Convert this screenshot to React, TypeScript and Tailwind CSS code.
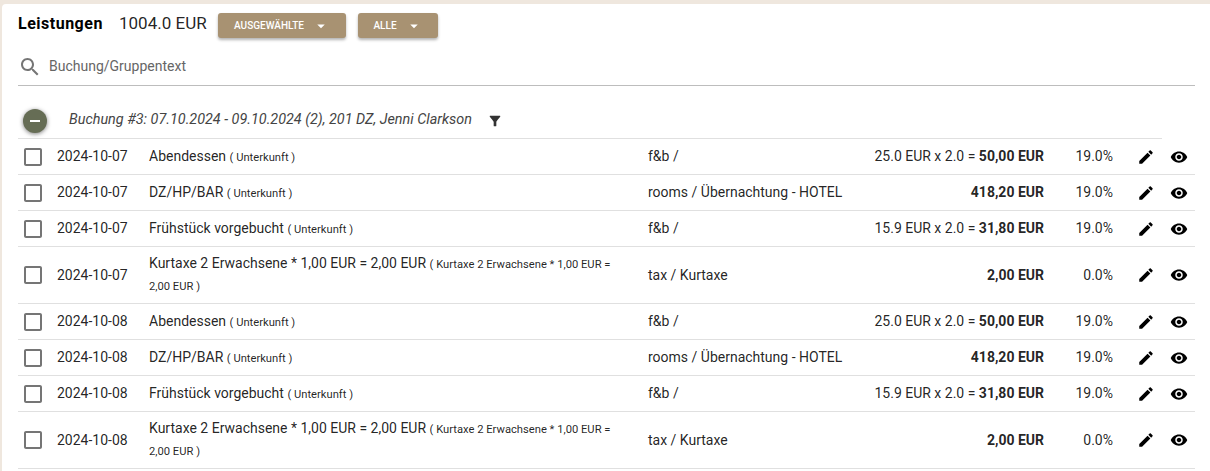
import React from "react";

type Row = {
  date: string;
  name: string;
  note: string;
  cat: string;
  calc?: string;
  total: string;
  tax: string;
  tall?: boolean;
};

const dayRows = (date: string): Row[] => [
  { date, name: "Abendessen", note: "Unterkunft", cat: "f&b /", calc: "25.0 EUR x 2.0 = ", total: "50,00 EUR", tax: "19.0%" },
  { date, name: "DZ/HP/BAR", note: "Unterkunft", cat: "rooms / Übernachtung - HOTEL", total: "418,20 EUR", tax: "19.0%" },
  { date, name: "Frühstück vorgebucht", note: "Unterkunft", cat: "f&b /", calc: "15.9 EUR x 2.0 = ", total: "31,80 EUR", tax: "19.0%" },
  {
    date,
    name: "Kurtaxe 2 Erwachsene * 1,00 EUR = 2,00 EUR",
    note: "Kurtaxe 2 Erwachsene * 1,00 EUR = 2,00 EUR",
    cat: "tax / Kurtaxe",
    total: "2,00 EUR",
    tax: "0.0%",
    tall: true,
  },
];

const rows = [...dayRows("2024-10-07"), ...dayRows("2024-10-08")];

const Icon = ({ d, className }: { d: string; className: string }) => (
  <svg viewBox="0 0 24 24" className={className} fill="currentColor">
    <path d={d} />
  </svg>
);

const paths = {
  arrow: "M7 10l5 5 5-5z",
  search:
    "M15.5 14h-.79l-.28-.27C15.41 12.59 16 11.11 16 9.5 16 5.91 13.09 3 9.5 3S3 5.91 3 9.5 5.91 16 9.5 16c1.61 0 3.09-.59 4.23-1.57l.27.28v.79l5 4.99L20.49 19l-4.99-5zm-6 0C7.01 14 5 11.99 5 9.5S7.01 5 9.5 5 14 7.01 14 9.5 11.99 14 9.5 14z",
  filter:
    "M4.25 5.61C6.27 8.2 10 13 10 13v6c0 .55.45 1 1 1h2c.55 0 1-.45 1-1v-6s3.72-4.8 5.74-7.39c.51-.66.04-1.61-.79-1.61H5.04c-.83 0-1.3.95-.79 1.61z",
  box: "M19 5v14H5V5h14m0-2H5c-1.1 0-2 .9-2 2v14c0 1.1.9 2 2 2h14c1.1 0 2-.9 2-2V5c0-1.1-.9-2-2-2z",
  edit: "M3 17.25V21h3.75L17.81 9.94l-3.75-3.75L3 17.25zM20.71 7.04c.39-.39.39-1.02 0-1.41l-2.34-2.34c-.39-.39-1.02-.39-1.41 0l-1.83 1.83 3.75 3.75 1.83-1.83z",
  eye: "M12 4.5C7 4.5 2.73 7.61 1 12c1.73 4.39 6 7.5 11 7.5s9.27-3.11 11-7.5c-1.73-4.39-6-7.5-11-7.5zM12 17c-2.76 0-5-2.24-5-5s2.24-5 5-5 5 2.24 5 5-2.24 5-5 5zm0-8c-1.66 0-3 1.34-3 3s1.34 3 3 3 3-1.34 3-3-1.34-3-3-3z",
};

const DropButton = ({ label, width }: { label: string; width: string }) => (
  <button
    className={`flex h-[25px] items-center justify-center gap-[8px] rounded-[3px] bg-[#a89272] text-[10px] font-medium text-white shadow-[0_2px_3px_rgba(0,0,0,0.3)] ${width}`}
  >
    {label}
    <Icon d={paths.arrow} className="h-[18px] w-[18px]" />
  </button>
);

export default function App() {
  return (
    <div className="h-[471px] overflow-hidden bg-[#efe7de] pl-[2px] pt-[4px] font-['Roboto',sans-serif] text-[14px] text-[#000000de]">
      <div className="h-[480px] rounded-tl-[4px] bg-white pl-[16px] pr-[15px]">
        {/* toolbar */}
        <div className="flex h-[34px] items-center pt-[9px]">
          <span className="-mt-[3px] w-[101px] text-[16px] font-bold tracking-[0.5px] text-black">Leistungen</span>
          <span className="-mt-[3px] w-[99px] text-[17px] text-[#000000de]">1004.0 EUR</span>
          <DropButton label="AUSGEWÄHLTE" width="w-[128px]" />
          <div className="w-[12px]" />
          <DropButton label="ALLE" width="w-[80px]" />
        </div>

        {/* search */}
        <div className="mt-[13px] flex h-[35px] items-center border-b border-[#bdbdbd] pb-[2px]">
          <Icon d={paths.search} className="h-[24px] w-[24px] text-[#757575]" />
          <span className="-mt-[2px] ml-[7px] text-[#666666]">Buchung/Gruppentext</span>
        </div>

        {/* group head */}
        <div className="mt-[15px] flex h-[38px] w-[1144px] items-start border-b border-[#e0e0e0]">
          <div className="ml-[5px] mt-[8px] flex h-[24px] w-[24px] items-center justify-center rounded-full bg-[#666d55] shadow-[0_1px_4px_rgba(0,0,0,0.5)]">
            <div className="h-[2px] w-[10px] bg-white" />
          </div>
          <span className="ml-[22px] mt-[8px] text-[14.4px] italic text-[#444444]">
            Buchung #3: 07.10.2024 - 09.10.2024 (2), 201 DZ, Jenni Clarkson
          </span>
          <Icon d={paths.filter} className="ml-[15px] mt-[12px] h-[16px] w-[16px] text-[#333333]" />
        </div>

        {/* rows */}
        {rows.map((row, i) => (
          <div
            key={i}
            className={`flex items-center border-b border-[#e0e0e0] ${row.tall ? "h-[57px]" : "h-[36px]"}`}
          >
            <Icon d={paths.box} className="ml-[3px] h-[24px] w-[24px] shrink-0 text-[#757575]" />
            <span className="ml-[12px] w-[92px] shrink-0">{row.date}</span>
            <div className={`w-[499px] shrink-0 pr-[30px] ${row.tall ? "leading-[21px]" : ""}`}>
              {row.name} <span className="text-[11.2px]">( {row.note} )</span>
            </div>
            <span className="w-[180px] shrink-0 whitespace-nowrap">{row.cat}</span>
            <span className="w-[216px] shrink-0 text-right">
              {row.calc}
              <b className="font-bold">{row.total}</b>
            </span>
            <span className="w-[69px] shrink-0 text-right">{row.tax}</span>
            <Icon d={paths.edit} className="ml-[24px] h-[18px] w-[18px] shrink-0 text-black" />
            <Icon d={paths.eye} className="ml-[15px] h-[18px] w-[18px] shrink-0 text-black" />
          </div>
        ))}
      </div>
    </div>
  );
}
